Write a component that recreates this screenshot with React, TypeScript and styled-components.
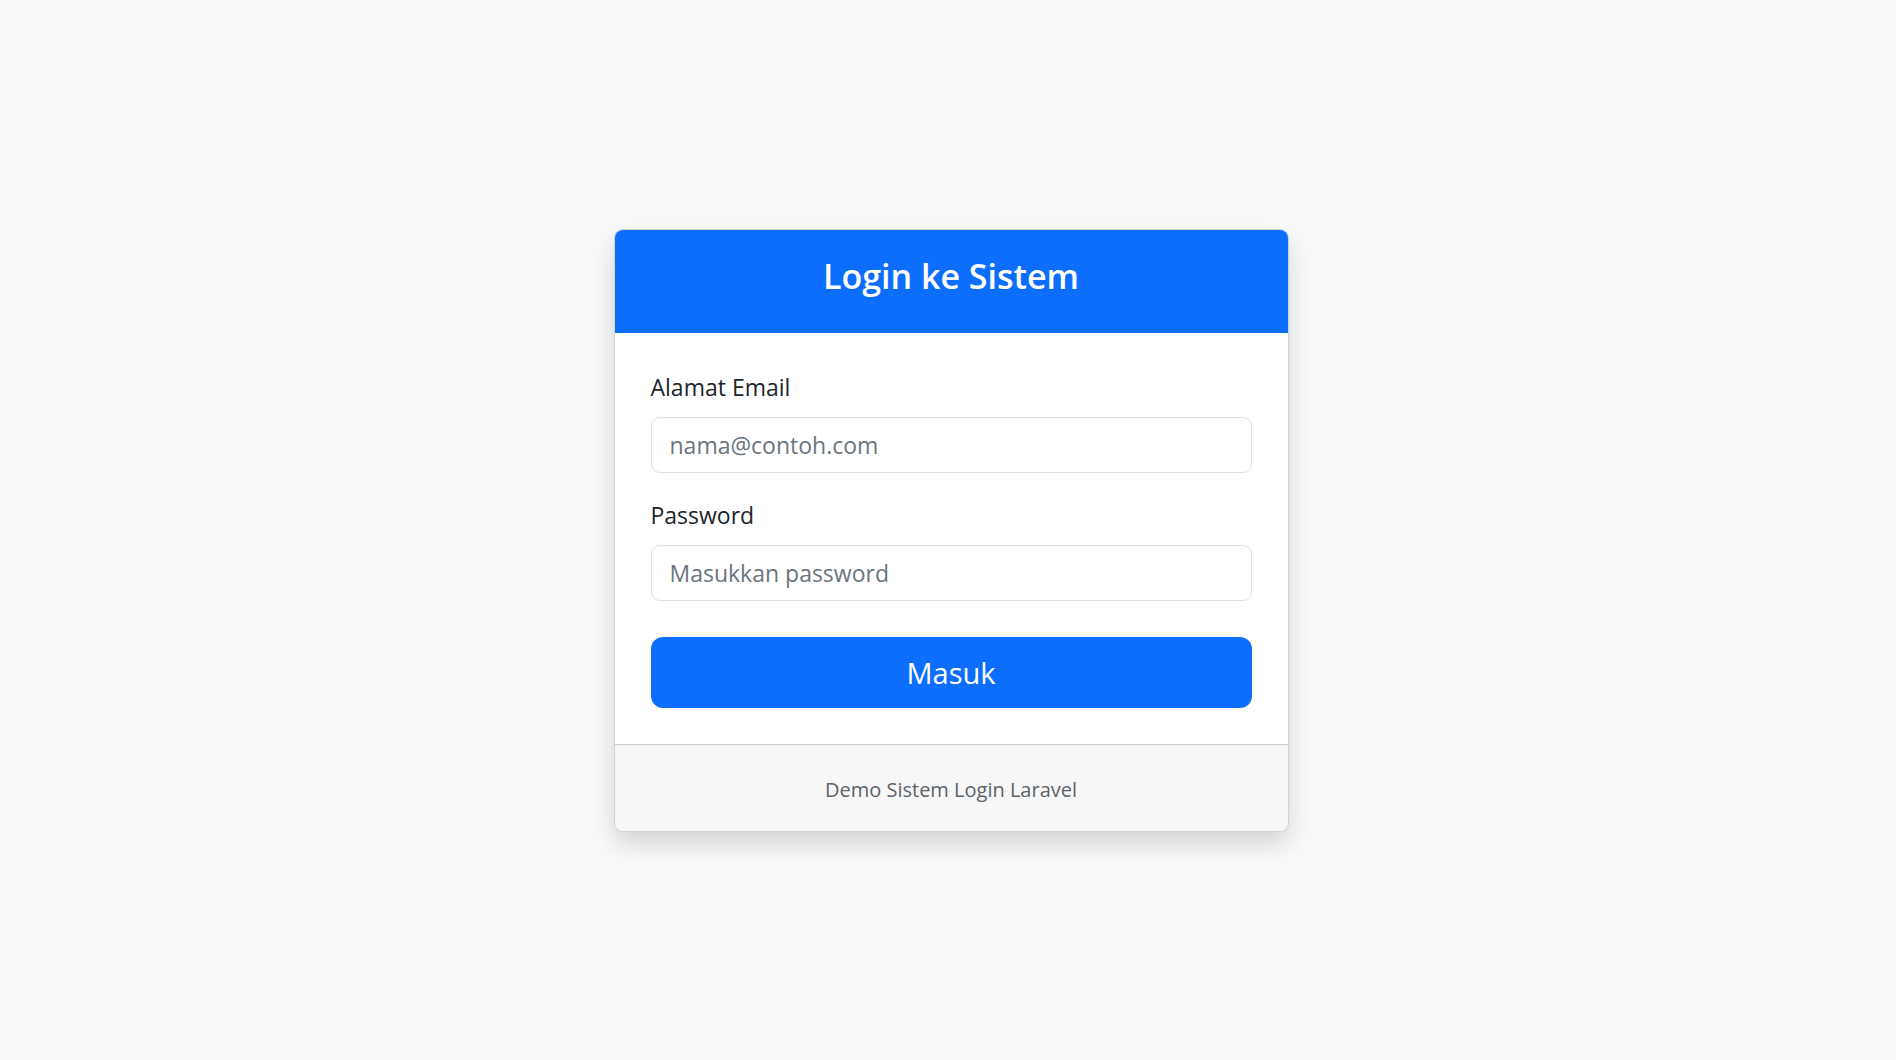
import styled, { createGlobalStyle } from "styled-components";

const GlobalStyle = createGlobalStyle`
  html, body {
    margin: 0;
    padding: 0;
    background: #f8f9fa;
    font-family: "Open Sans", "Noto Sans", sans-serif;
    color: #212529;
  }
  * {
    box-sizing: border-box;
  }
`;

const Page = styled.main`
  min-height: 100vh;
  display: flex;
  align-items: center;
  justify-content: center;
  padding-left: 6px;
`;

const Card = styled.div`
  width: 675px;
  background: #fff;
  border: 1.5px solid rgba(0, 0, 0, 0.175);
  border-radius: 9px;
  box-shadow: 0 12px 24px rgba(0, 0, 0, 0.15);
  overflow: hidden;
`;

const CardHeader = styled.div`
  height: 103px;
  padding-bottom: 9px;
  background: #0d6efd;
  display: flex;
  align-items: center;
  justify-content: center;
`;

const Title = styled.h4`
  margin: 0;
  color: #fff;
  font-size: 34px;
  font-weight: 600;
  line-height: 1.2;
`;

const CardBody = styled.form`
  padding: 36px;
  display: flex;
  flex-direction: column;
`;

const Field = styled.div<{ $gap: number }>`
  display: flex;
  flex-direction: column;
  margin-bottom: ${(p) => p.$gap}px;
`;

const Label = styled.label`
  font-size: 23px;
  line-height: 36px;
  margin-bottom: 12px;
  color: #212529;
`;

const Input = styled.input`
  height: 56px;
  padding: 0 18px;
  font-family: inherit;
  font-size: 23px;
  color: #212529;
  background: #fff;
  border: 1.5px solid #dee2e6;
  border-radius: 9px;
  outline: none;

  &::placeholder {
    color: #6c757d;
  }
`;

const SubmitButton = styled.button`
  height: 71px;
  width: 100%;
  border: none;
  border-radius: 12px;
  background: #0d6efd;
  color: #fff;
  font-family: inherit;
  font-size: 29px;
  cursor: pointer;
`;

const CardFooter = styled.div`
  padding: 27px 24px 23px;
  background: #f7f7f7;
  border-top: 1.5px solid rgba(0, 0, 0, 0.175);
  text-align: center;
  font-size: 20px;
  line-height: 36px;
  color: #5c636a;
`;

export default function App() {
  return (
    <>
      <GlobalStyle />
      <Page>
        <Card>
          <CardHeader>
            <Title>Login ke Sistem</Title>
          </CardHeader>
          <CardBody onSubmit={(e) => e.preventDefault()}>
            <Field $gap={24}>
              <Label htmlFor="email">Alamat Email</Label>
              <Input id="email" type="email" placeholder="nama@contoh.com" />
            </Field>
            <Field $gap={36}>
              <Label htmlFor="password">Password</Label>
              <Input id="password" type="password" placeholder="Masukkan password" />
            </Field>
            <SubmitButton type="submit">Masuk</SubmitButton>
          </CardBody>
          <CardFooter>Demo Sistem Login Laravel</CardFooter>
        </Card>
      </Page>
    </>
  );
}
